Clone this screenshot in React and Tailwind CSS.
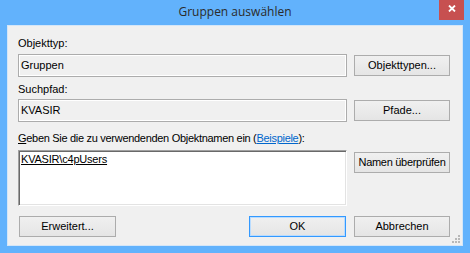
import React from "react";

const font = { fontFamily: '"Liberation Sans", Arial, sans-serif' };

const Button = ({ children, width = "w-[96px]", height = "h-[21px]", focused = false, className = "" }) => (
  <button
    type="button"
    className={`${width} ${height} ${className} flex items-center justify-center border bg-linear-to-b from-[#f0f0f0] to-[#e5e5e5] text-[11px] leading-none text-black ${
      focused ? "border-[#3399ff] shadow-[inset_0_0_0_1px_#b9dcff]" : "border-[#acacac]"
    }`}
  >
    {children}
  </button>
);

const ReadOnlyBox = ({ value }) => (
  <div className="flex h-[23px] w-[329px] items-center border border-[#acacac] bg-[#f0f0f0] pl-[2px] text-[11px] text-black shadow-[inset_0_0_0_1px_#ffffff]">
    {value}
  </div>
);

const Label = ({ children, className = "" }) => (
  <div className={`h-[13px] text-[11px] leading-[13px] text-black ${className}`}>{children}</div>
);

export default function App() {
  return (
    <div className="flex h-[253px] w-[470px] flex-col bg-[#62b2fc]" style={font}>
      {/* title bar */}
      <div className="relative flex h-[25px] items-center justify-center">
        <span
          className="pb-[1px] text-[12px] text-[#2b2b2b]"
          style={{ fontFamily: '"Open Sans", "Noto Sans", sans-serif' }}
        >
          Gruppen auswählen
        </span>
        <div className="absolute right-[6px] top-0 flex h-[20px] w-[25px] items-center justify-center bg-[#c75050] pb-[3px]">
          <svg width="8" height="7" viewBox="0 0 8 7">
            <path d="M1 0.5 L7 6.5 M7 0.5 L1 6.5" stroke="#fff" strokeWidth="1.8" />
          </svg>
        </div>
      </div>

      {/* client area */}
      <div className="relative mx-[7px] flex h-[221px] flex-col border border-[#d4e6f8] bg-[#f0f0f0] pl-[10px] pr-[12px] pt-[11px]">
        <Label>Objekttyp:</Label>
        <div className="mt-[4px] flex items-center gap-[7px]">
          <ReadOnlyBox value="Gruppen" />
          <Button>Objekttypen...</Button>
        </div>

        <Label className="mt-[6px]">Suchpfad:</Label>
        <div className="mt-[3px] flex items-center gap-[7px]">
          <ReadOnlyBox value="KVASIR" />
          <Button>Pfade...</Button>
        </div>

        <Label className="mt-[10px] tracking-[-0.3px]">
          <span className="underline">G</span>eben Sie die zu verwendenden Objektnamen ein (
          <span className="text-[#0066cc] underline">Beispiele</span>):
        </Label>
        <div className="mt-[5px] flex items-start gap-[7px]">
          <div className="h-[56px] w-[329px] border border-t-[#a0a0a0] border-l-[#a0a0a0] border-b-[#ffffff] border-r-[#ffffff] bg-white pl-[2px] pt-[2px] text-[11px] leading-[13px] tracking-[-0.2px] text-black shadow-[inset_1px_1px_0_#696969,inset_-1px_-1px_0_#e3e3e3]">
            <span className="underline">KVASIR\c4pUsers</span>
          </div>
          <Button height="h-[21px]" className="mt-[2px] tracking-[-0.3px]">
            Namen überprüfen
          </Button>
        </div>

        <div className="mt-[10px] flex items-center">
          <Button width="w-[97px]" className="ml-px">
            Erweitert...
          </Button>
          <div className="flex-1" />
          <Button width="w-[97px]" focused>
            OK
          </Button>
          <Button className="ml-[8px]">Abbrechen</Button>
        </div>

        {/* size grip */}
        <svg className="absolute bottom-[2px] right-[2px]" width="8" height="8" viewBox="0 0 8 8">
          <rect x="6" y="0" width="2" height="2" fill="#b8b8b8" />
          <rect x="3" y="3" width="2" height="2" fill="#b8b8b8" />
          <rect x="6" y="3" width="2" height="2" fill="#b8b8b8" />
          <rect x="0" y="6" width="2" height="2" fill="#b8b8b8" />
          <rect x="3" y="6" width="2" height="2" fill="#b8b8b8" />
          <rect x="6" y="6" width="2" height="2" fill="#b8b8b8" />
        </svg>
      </div>
    </div>
  );
}
